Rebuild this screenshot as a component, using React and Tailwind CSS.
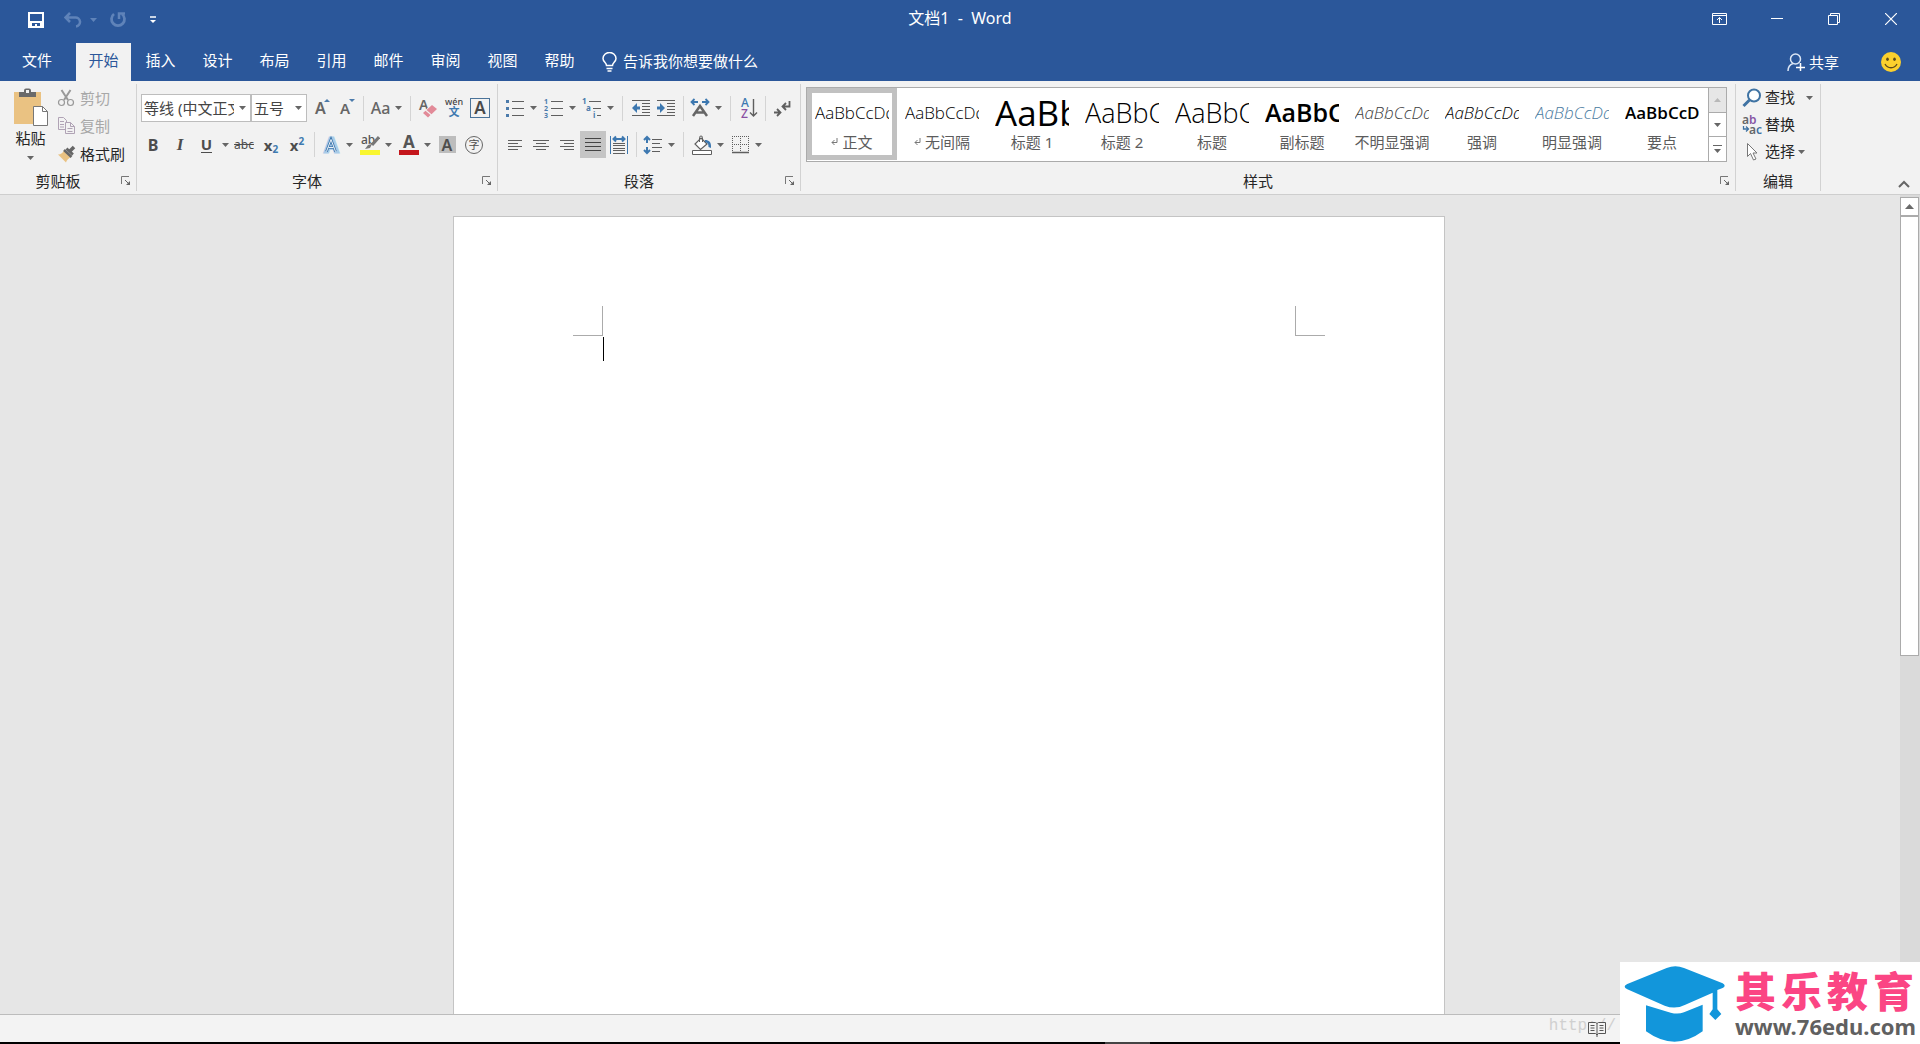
import React from "react";

function Arrow({ className = "text-[#666666]" }) {
  return (
    <svg className={`shrink-0 ${className}`} width="7" height="4" viewBox="0 0 7 4" aria-hidden="true">
      <path d="M0 0h7L3.5 4z" fill="currentColor" />
    </svg>
  );
}

function Icon({ w = 20, h = 20, children, className = "" }) {
  return (
    <svg
      className={`shrink-0 ${className}`}
      width={w}
      height={h}
      viewBox={`0 0 ${w} ${h}`}
      fill="none"
      stroke="#5f5f5f"
      strokeWidth="1"
      aria-hidden="true"
    >
      {children}
    </svg>
  );
}

function Tool({ label, w, menu, active, children }) {
  return (
    <button
      type="button"
      aria-label={label}
      className={`flex h-[27px] shrink-0 items-center justify-center gap-[5px] ${w} ${active ? "bg-[#c5c5c5]" : "hover:bg-[#dcdcdc]"}`}
    >
      {children}
      {menu && <Arrow />}
    </button>
  );
}

function Sep({ w }) {
  return (
    <span className={`flex shrink-0 justify-center ${w}`}>
      <span className="h-[25px] w-px bg-[#d4d4d4]" />
    </span>
  );
}

function Launcher({ label }) {
  return (
    <button type="button" aria-label={label} className="flex w-5 items-center justify-center">
      <Icon w={10} h={10}>
        <path d="M.5 8V.5H8" stroke="#777" />
        <path d="M4 4l4 4" stroke="#666" />
        <path d="M9 5v4H5z" fill="#666" stroke="none" />
      </Icon>
    </button>
  );
}

function Group({ title, w, launcher = true, children }) {
  return (
    <section aria-label={title} className={`flex flex-col border-r border-[#d2d2d2] ${w}`}>
      <div className="flex-1">{children}</div>
      <div className="flex h-5 items-center">
        <span className="flex-1 text-center leading-5">{title}</span>
        {launcher && <Launcher label={title + "设置"} />}
      </div>
    </section>
  );
}

function Combo({ label, value, w }) {
  return (
    <span className={`relative flex h-7 shrink-0 items-center border border-[#bdbdbd] bg-white ${w}`}>
      <select aria-label={label} className="h-full w-full appearance-none bg-transparent pr-4 pl-[2px] text-[#444444] outline-none">
        <option>{value}</option>
      </select>
      <span className="pointer-events-none absolute right-1">
        <Arrow />
      </span>
    </span>
  );
}

const tabs = ["开始", "插入", "设计", "布局", "引用", "邮件", "审阅", "视图", "帮助"];

const styles = [
  { name: "正文", mark: true, sample: "AaBbCcDd", cls: "text-[17px] font-light text-black", active: true },
  { name: "无间隔", mark: true, sample: "AaBbCcDd", cls: "text-[17px] font-light text-black" },
  { name: "标题 1", sample: "AaBb", cls: "text-[35px] font-medium text-black" },
  { name: "标题 2", sample: "AaBbC", cls: "text-[27px] font-light text-black" },
  { name: "标题", sample: "AaBbC", cls: "text-[27px] font-light text-black" },
  { name: "副标题", sample: "AaBbC", cls: "text-[25px] font-semibold text-black" },
  { name: "不明显强调", sample: "AaBbCcDd", cls: "text-[17px] font-light italic text-[#404040]" },
  { name: "强调", sample: "AaBbCcDd", cls: "text-[17px] font-light italic text-black" },
  { name: "明显强调", sample: "AaBbCcDd", cls: "text-[17px] font-light italic text-[#4a7ba0]" },
  { name: "要点", sample: "AaBbCcD", cls: "text-[17px] font-semibold text-black" },
];

function TitleBar() {
  return (
    <div className="grid h-[43px] grid-cols-3 items-start text-white">
      <div className="flex h-10 items-center">
        <button type="button" aria-label="保存" className="ml-7 flex">
          <Icon w={16} h={16}>
            <path d="M0 0h16v16H0zM2 2v7h12V2zM4 11v3h3v-2h2v2h3v-3z" fill="#fff" fillRule="evenodd" stroke="none" />
          </Icon>
        </button>
        <button type="button" aria-label="撤消" className="ml-5 flex items-center gap-2 text-[#6488bd]">
          <Icon w={18} h={16}>
            <path d="M6 1L1.500 5.500 6 10M2 5.500h9a4.500 4.500 0 0 1 1 9" stroke="#5f83b9" strokeWidth="2.500" />
          </Icon>
          <Arrow className="text-[#5f83b9]" />
        </button>
        <button type="button" aria-label="重复" className="ml-3 flex">
          <Icon w={18} h={16}>
            <path d="M5 2a6.500 6.500 0 1 0 8 0" stroke="#5f83b9" strokeWidth="2.800" />
            <path d="M10 7V1.500h6" stroke="#5f83b9" strokeWidth="2.500" />
          </Icon>
        </button>
        <button type="button" aria-label="自定义快速访问工具栏" className="ml-[23px] flex">
          <Icon w={6} h={8}>
            <path d="M0 1h6" stroke="#fff" strokeWidth="1.500" />
            <path d="M0 4h6L3 7z" fill="#fff" stroke="none" />
          </Icon>
        </button>
      </div>
      <h1 className="pt-[7px] text-center text-base leading-[22px] whitespace-pre">文档1  -  Word</h1>
      <div className="flex h-[38px] items-center justify-end pr-px">
        <button type="button" aria-label="功能区显示选项" className="flex w-[57px] justify-center">
          <Icon w={15} h={12}>
            <path d="M.5.5h14v11H.5zM.5 2.500h14M7.500 10V4.500M5 7l2.500-2.500L10 7" stroke="#fff" />
          </Icon>
        </button>
        <button type="button" aria-label="最小化" className="flex w-[57px] justify-center">
          <Icon w={12} h={12}>
            <path d="M0 5.500h12" stroke="#fff" />
          </Icon>
        </button>
        <button type="button" aria-label="向下还原" className="flex w-[57px] justify-center">
          <Icon w={12} h={12}>
            <path d="M.5 2.500h9v9h-9zM2.500 2.500v-2h9v9h-2" stroke="#fff" />
          </Icon>
        </button>
        <button type="button" aria-label="关闭" className="flex w-[57px] justify-center">
          <Icon w={12} h={12}>
            <path d="M0 0l12 12M12 0L0 12" stroke="#fff" strokeWidth="1.200" />
          </Icon>
        </button>
      </div>
    </div>
  );
}

function TabBar() {
  return (
    <nav className="flex h-[38px] text-white">
      <button type="button" className="w-[74px] pb-[3px]">文件</button>
      <div className="ml-[2px] flex gap-[2px]">
        {tabs.map((t, i) => (
          <button key={t} type="button" className={i === 0 ? "w-[55px] bg-[#f2f2f2] pb-[3px] text-[#2b579a]" : "w-[55px] pb-[3px]"}>
            {t}
          </button>
        ))}
      </div>
      <button type="button" className="ml-[15px] flex items-center gap-[6px]">
        <Icon w={15} h={20}>
          <path d="M4.500 13.500c0-3-3.500-3.500-3.500-7a6.500 6 0 0 1 13 0c0 3.500-3.500 4-3.500 7z" stroke="#fff" strokeWidth="1.500" />
          <path d="M4.500 16.500h6M5.500 19h4" stroke="#fff" strokeWidth="1.500" />
        </Icon>
        <span className="pb-px">告诉我你想要做什么</span>
      </button>
      <button type="button" className="ml-auto flex items-center gap-1">
        <Icon w={18} h={18}>
          <circle cx="8.500" cy="6" r="5" stroke="#dbe6f5" strokeWidth="1.500" />
          <path d="M1 18c0-4 2-6.500 5-7.500" stroke="#dbe6f5" strokeWidth="1.500" />
          <path d="M9 14.500h9M13.500 10v8" stroke="#fff" strokeWidth="1.500" />
        </Icon>
        共享
      </button>
      <button type="button" aria-label="反馈" className="mr-[19px] ml-[42px] flex items-center pb-px">
        <Icon>
          <circle cx="10" cy="10" r="10" fill="#fbd02d" stroke="none" />
          <ellipse cx="6.500" cy="7.200" rx="1.300" ry="1.800" fill="#5c4a1b" stroke="none" />
          <ellipse cx="13.500" cy="7.200" rx="1.300" ry="1.800" fill="#5c4a1b" stroke="none" />
          <path d="M4 12c2.500 5 9.500 5 12 0" stroke="#5c4a1b" strokeWidth="1.300" />
        </Icon>
      </button>
    </nav>
  );
}

function Clipboard() {
  return (
    <Group title="剪贴板" w="w-[137px]">
      <div className="flex">
        <button type="button" className="flex w-[56px] flex-col items-center pt-1 pl-[5px]">
          <Icon w={36} h={40}>
            <path d="M1 4h27v32H1z" fill="#eac282" stroke="none" />
            <path d="M6 9V4h5V2.500A2 2 0 0 1 13 .5h3a2 2 0 0 1 2 2V4h5v5z" fill="#6a6a6a" stroke="none" />
            <rect x="13" y="2" width="3" height="3" fill="#f2f2f2" stroke="none" />
            <path d="M20.500 18.500h9l5 5v14h-14z" fill="#fff" stroke="#777" />
            <path d="M29.500 18.500v5h5" stroke="#777" />
          </Icon>
          <span className="leading-5">粘贴</span>
          <span className="pt-2">
            <Arrow />
          </span>
        </button>
        <div className="flex flex-col">
          <button type="button" disabled className="flex h-7 items-center gap-1 text-[#a8a8a8]">
            <Icon>
              <path d="M5.500 2l6.500 10M14.500 2L8 12" stroke="#999" strokeWidth="2" />
              <circle cx="5.500" cy="14.500" r="3" stroke="#999" strokeWidth="1.200" />
              <circle cx="14.500" cy="14.500" r="3" stroke="#999" strokeWidth="1.200" />
            </Icon>
            剪切
          </button>
          <button type="button" disabled className="flex h-7 items-center gap-1 text-[#a8a8a8]">
            <Icon>
              <path d="M2.500 1.500h5l3 3v9h-8zM4 5.500h4M4 8.500h4M4 11h4" stroke="#b0a3b5" />
              <path d="M9.500 6.500h5l4 4v7h-9z" fill="#f2f2f2" stroke="#b0a3b5" />
              <path d="M14.500 6.500v4h4M11.500 12.500h5M11.500 15.500h5" stroke="#b0a3b5" />
            </Icon>
            复制
          </button>
          <button type="button" className="flex h-7 items-center gap-1">
            <Icon>
              <path d="M2 10.500c3 0 5-2 6-4l7 6.500c-2 1-4.500 3-5 5.500z" fill="#eac282" stroke="none" />
              <path d="M8 6l7.500 7M10.500 4.500l6.500 6" stroke="#666" strokeWidth="2.500" />
              <path d="M13.500 7.500L18 3" stroke="#666" strokeWidth="3.500" />
            </Icon>
            格式刷
          </button>
        </div>
      </div>
    </Group>
  );
}

function FontGroup() {
  return (
    <Group title="字体" w="w-[361px]">
      <div className="flex h-[38px] items-center pt-[10px] pl-1">
        <Combo label="字体" value="等线 (中文正文)" w="w-[110px]" />
        <Combo label="字号" value="五号" w="w-[56px]" />
        <span className="w-[3px]" />
        <Tool label="增大字号" w="w-[24px]">
          <Icon>
            <text x="3" y="16" fontSize="16" fontWeight="600" fill="#666" stroke="none">A</text>
            <path d="M12 4l3-3 3 3z" fill="#4b7bab" stroke="none" />
          </Icon>
        </Tool>
        <Tool label="减小字号" w="w-[26px]">
          <Icon>
            <text x="3" y="16" fontSize="15" fontWeight="600" fill="#666" stroke="none">A</text>
            <path d="M12 1h6l-3 3z" fill="#4b7bab" stroke="none" />
          </Icon>
        </Tool>
        <Sep w="w-[6px]" />
        <Tool label="更改大小写" w="w-[41px]" menu>
          <span className="text-base font-medium text-[#666666]">Aa</span>
        </Tool>
        <Sep w="w-[6px]" />
        <Tool label="清除所有格式" w="w-[30px]">
          <Icon>
            <text x="1" y="12" fontSize="14" fontWeight="600" fill="#666" stroke="none">A</text>
            <path d="M4 15l10-9 6 5-10 9z" fill="#f2f2f2" stroke="none" />
            <path d="M5 15l2.500-2.200 5 4.200-2.500 2.500zM8.500 12l5.500-5 5 4-5.500 5.200z" fill="#e28a98" stroke="none" />
          </Icon>
        </Tool>
        <Tool label="拼音指南" w="w-[22px]">
          <span className="flex flex-col items-center">
            <span className="text-[9px] leading-[8px] font-medium text-[#444444]">wén</span>
            <span className="text-[11px] leading-3 font-bold text-[#3f7ab0]">文</span>
          </span>
        </Tool>
        <Tool label="字符边框" w="w-[30px]">
          <span className="flex size-5 items-center justify-center border border-[#4a7399] text-[17px] font-semibold text-[#4a4a4a]">A</span>
        </Tool>
      </div>
      <div className="flex items-center pt-[9px] pl-1 text-[#4d4d4d]">
        <Tool label="加粗" w="w-[24px]">
          <span className="text-base font-bold">B</span>
        </Tool>
        <Tool label="倾斜" w="w-[30px]">
          <span className="font-['Liberation_Serif',serif] text-[17px] font-bold italic">I</span>
        </Tool>
        <Tool label="下划线" w="w-[35px]" menu>
          <span className="w-5 text-center">
            <span className="inline-block border-b border-[#4d4d4d] text-[15px] leading-4 font-bold">U</span>
          </span>
        </Tool>
        <Tool label="删除线" w="w-[28px]">
          <span className="text-xs line-through">abc</span>
        </Tool>
        <Tool label="下标" w="w-[26px]">
          <span className="flex items-end leading-5 font-bold">
            x<span className="text-[10px] leading-3 text-[#3f7ab0]">2</span>
          </span>
        </Tool>
        <Tool label="上标" w="w-[26px]">
          <span className="flex items-start leading-5 font-bold">
            x<span className="text-[10px] leading-3 text-[#3f7ab0]">2</span>
          </span>
        </Tool>
        <Sep w="w-[8px]" />
        <Tool label="文本效果" w="w-[38px]" menu>
          <Icon>
            <text x="4" y="17" fontSize="19" fontWeight="600" fill="#f8fcff" stroke="#a9cbe8" strokeWidth="3">A</text>
            <path d="M5.500 16.500L10 4.500l4.500 12M7.500 12.500h5" stroke="#3f78ad" strokeWidth="2.600" />
            <path d="M5.500 16.500L10 4.500l4.500 12M7.500 12.500h5" stroke="#fff" strokeWidth="0.900" />
          </Icon>
        </Tool>
        <Tool label="突出显示" w="w-[39px]" menu>
          <Icon>
            <text x="1" y="9" fontSize="12" fontWeight="500" fill="#555" stroke="none">ab</text>
            <path d="M19 2l-7 8" stroke="#777" strokeWidth="3" />
            <path d="M12 9l-2 4-5 1 3-4z" fill="#777" stroke="none" />
            <path d="M0 15h20v5H0z" fill="#f9f62f" stroke="none" />
          </Icon>
        </Tool>
        <Tool label="字体颜色" w="w-[40px]" menu>
          <Icon>
            <text x="4" y="13" fontSize="17" fontWeight="700" fill="#555" stroke="none">A</text>
            <path d="M0 15h20v5H0z" fill="#c4161c" stroke="none" />
          </Icon>
        </Tool>
        <Tool label="字符底纹" w="w-[24px]">
          <span className="flex size-[17px] items-center justify-center bg-[#bdbdbd] text-base font-semibold">A</span>
        </Tool>
        <Tool label="带圈字符" w="w-[30px]">
          <span className="flex size-[18px] items-center justify-center rounded-full border border-[#666666] text-[11px] leading-none">字</span>
        </Tool>
      </div>
    </Group>
  );
}

function ParagraphGroup() {
  return (
    <Group title="段落" w="w-[303px]">
      <div className="flex h-[38px] items-center pt-[10px] pl-1">
        <Tool label="项目符号" w="w-[38px]" menu>
          <Icon>
            <path d="M1 2h3v3H1zM1 9h3v3H1zM1 16h3v3H1z" fill="#4b7bab" stroke="none" />
            <path d="M7 3.500h12M7 10.500h12M7 17.500h12" />
          </Icon>
        </Tool>
        <Tool label="编号" w="w-[39px]" menu>
          <Icon>
            <g fontSize="7" fontWeight="700" fill="#4b7bab" stroke="none">
              <text x="0" y="6">1</text>
              <text x="0" y="13">2</text>
              <text x="0" y="20">3</text>
            </g>
            <path d="M7 3.500h12M7 10.500h12M7 17.500h12" />
          </Icon>
        </Tool>
        <Tool label="多级列表" w="w-[38px]" menu>
          <Icon>
            <g fontSize="8" fontWeight="700" fill="#4b7bab" stroke="none">
              <text x="0" y="6">1</text>
              <text x="4" y="13">a</text>
              <text x="11" y="20">i</text>
            </g>
            <path d="M7 3.500h12M11 10.500h8M15 17.500h4" />
          </Icon>
        </Tool>
        <Sep w="w-[11px]" />
        <Tool label="减少缩进量" w="w-[25px]">
          <Icon>
            <path d="M1 2.500h18M11 5.500h8M11 8.500h8M11 11.500h8M11 14.500h8M1 17.500h18" />
            <path d="M9 10H4" stroke="#3d78b0" strokeWidth="3" />
            <path d="M6 5v10L1 10z" fill="#3d78b0" stroke="none" />
          </Icon>
        </Tool>
        <Tool label="增加缩进量" w="w-[26px]">
          <Icon>
            <path d="M1 2.500h18M11 5.500h8M11 8.500h8M11 11.500h8M11 14.500h8M1 17.500h18" />
            <path d="M1 10h5" stroke="#3d78b0" strokeWidth="3" />
            <path d="M4 5v10l5-5z" fill="#3d78b0" stroke="none" />
          </Icon>
        </Tool>
        <Sep w="w-[8px]" />
        <Tool label="中文版式" w="w-[37px]" menu>
          <Icon>
            <path d="M3 18L10 8l7 10M6 14.500h8" stroke="#666" strokeWidth="2.500" />
            <path d="M2 4h6M12 4h6" stroke="#3d78b0" strokeWidth="1.800" />
            <path d="M4.500 1L1.500 4l3 3M15.500 1l3 3-3 3" stroke="#3d78b0" strokeWidth="1.800" />
          </Icon>
        </Tool>
        <Sep w="w-[12px]" />
        <Tool label="排序" w="w-[26px]">
          <Icon>
            <text x="2" y="9" fontSize="12" fontWeight="500" fill="#3d78b0" stroke="none">A</text>
            <text x="2" y="20" fontSize="12" fontWeight="500" fill="#8a4fa3" stroke="none">Z</text>
            <path d="M14.500 1v17M11 14.500l3.500 3.500 3.500-3.500" strokeWidth="1.400" />
          </Icon>
        </Tool>
        <Sep w="w-[6px]" />
        <Tool label="显示编辑标记" w="w-[28px]">
          <Icon>
            <path d="M17.500 3v5.500H11M14 5l-3.500 3.500L14 12" strokeWidth="1.800" />
            <path d="M2 14.500h6M5 11l3.500 3.500L5 18" strokeWidth="1.800" />
          </Icon>
        </Tool>
      </div>
      <div className="flex items-center pt-[9px] pl-1">
        <Tool label="左对齐" w="w-[25px]">
          <Icon>
            <path d="M3 5.500h14M3 8.500h10M3 11.500h14M3 14.500h10" />
          </Icon>
        </Tool>
        <Tool label="居中" w="w-[27px]">
          <Icon>
            <path d="M2 5.500h16M5 8.500h10M2 11.500h16M5 14.500h10" />
          </Icon>
        </Tool>
        <Tool label="右对齐" w="w-[26px]">
          <Icon>
            <path d="M3 5.500h14M7 8.500h10M3 11.500h14M7 14.500h10" />
          </Icon>
        </Tool>
        <Tool label="两端对齐" w="w-[26px]" active>
          <Icon>
            <path d="M2 3.500h16M2 7.500h16M2 11.500h16M2 15.500h16" stroke="#444" />
          </Icon>
        </Tool>
        <Tool label="分散对齐" w="w-[26px]">
          <Icon>
            <path d="M1.500 1v18M18.500 1v18" stroke="#3d78b0" />
            <path d="M4 8.500h12M4 10.500h12M4 13.500h12M4 15.500h12M4 18.500h12" />
            <path d="M5 4h10M7 1.500L4.500 4 7 6.500M13 1.500L15.500 4 13 6.500" stroke="#3d78b0" strokeWidth="2" />
          </Icon>
        </Tool>
        <Sep w="w-[8px]" />
        <Tool label="行和段落间距" w="w-[37px]" menu>
          <Icon>
            <path d="M9 4.500h10M9 8.500h8M9 12.500h10M9 16.500h8" />
            <path d="M4 2v6M4 12v6M1 5l3-3 3 3M1 15l3 3 3-3" stroke="#3d78b0" strokeWidth="2" />
          </Icon>
        </Tool>
        <Sep w="w-[12px]" />
        <Tool label="底纹" w="w-[38px]" menu>
          <Icon>
            <path d="M9 3l6 6-6.500 5.500L3 9z" fill="#fff" strokeWidth="1.200" />
            <path d="M7.500 7V2.500a1.500 1.500 0 0 1 3 0V7" />
            <path d="M13 5c4 0 6.500 2 6 8l-2.500-1c0-3-.5-4-3.500-5z" fill="#3d78b0" stroke="none" />
            <path d="M.5 15.500h19v4H.5z" fill="#fff" />
          </Icon>
        </Tool>
        <Tool label="边框" w="w-[37px]" menu>
          <Icon>
            <path d="M2 1.500h17M2.500 1v16M18.500 1v16M10.500 1v16M2 9.500h17" strokeDasharray="1 1" />
            <path d="M2 17.500h17" strokeWidth="1.500" />
          </Icon>
        </Tool>
      </div>
    </Group>
  );
}

function StylesGroup() {
  return (
    <Group title="样式" w="min-w-0 flex-1">
      <div className="mx-[5px] mt-[3px] mr-2 flex h-[75px] border border-[#ababab] bg-white">
        <div className="flex min-w-0 flex-1 overflow-hidden">
          {styles.map((s) => (
            <button
              key={s.name}
              type="button"
              className={`flex h-[72px] w-[90px] shrink-0 flex-col border-[5px] px-[3px] ${s.active ? "border-[#c1c1c1]" : "border-transparent"}`}
            >
              <span
                className={`flex h-[38px] w-full items-center overflow-hidden font-['Open_Sans','Noto_Sans',sans-serif] leading-none ${s.cls}`}
              >
                {s.sample}
              </span>
              <span className="flex w-full items-center justify-center gap-1 leading-[22px] whitespace-nowrap text-[#5c5c5c]">
                {s.mark && (
                  <Icon w={7} h={8}>
                    <path d="M6 0v4.500H1M3.500 2L1 4.500 3.500 7" stroke="#777" />
                  </Icon>
                )}
                {s.name}
              </span>
            </button>
          ))}
        </div>
        <div className="flex w-[18px] flex-col border-l border-[#ababab]">
          <button type="button" aria-label="上一行" className="flex flex-1 items-center justify-center bg-[#e6e6e6]">
            <Arrow className="rotate-180 text-[#b8b8b8]" />
          </button>
          <button type="button" aria-label="下一行" className="flex flex-1 items-center justify-center border-y border-[#ababab]">
            <Arrow />
          </button>
          <button type="button" aria-label="其他样式" className="flex flex-1 flex-col items-center justify-center gap-[3px]">
            <span className="h-px w-[9px] bg-[#666666]" />
            <Arrow />
          </button>
        </div>
      </div>
    </Group>
  );
}

function EditGroup() {
  return (
    <Group title="编辑" w="w-[85px]" launcher={false}>
      <div className="flex flex-col pl-[6px]">
        <button type="button" className="flex h-[27px] items-center gap-[3px]">
          <Icon>
            <circle cx="12" cy="7.500" r="6" fill="#fff" stroke="#3f73a3" strokeWidth="2" />
            <path d="M7.500 12L1.500 18" stroke="#3f73a3" strokeWidth="3" />
          </Icon>
          查找
          <span className="ml-2">
            <Arrow />
          </span>
        </button>
        <button type="button" className="flex h-[27px] items-center gap-[3px]">
          <Icon>
            <g fontSize="12" fontWeight="600" fill="#666" stroke="none">
              <text x="0" y="9">
                a<tspan fill="#8756a5">b</tspan>
              </text>
              <text x="7" y="19">
                a<tspan fill="#3f73a3">c</tspan>
              </text>
            </g>
            <path d="M1.500 11v3H6M4 11.500L6.500 14 4 16.500" stroke="#3f73a3" strokeWidth="1.300" />
          </Icon>
          替换
        </button>
        <button type="button" className="flex h-[27px] items-center gap-[3px]">
          <Icon>
            <path d="M5.500 1.500v13l3-3 3 6.500 2.500-1-3-6h4z" fill="#fff" stroke="#777" />
          </Icon>
          选择
          <Arrow />
        </button>
      </div>
    </Group>
  );
}

function Workspace() {
  return (
    <main className="flex min-h-0 flex-1 bg-[#e6e6e6]">
      <div className="flex min-w-0 flex-1 justify-center overflow-hidden pt-[21px]">
        <article className="h-[1403px] w-[992px] border border-[#c4c4c4] bg-white">
          <div className="flex justify-between px-[119px] pt-[89px]">
            <span className="size-[30px] border-r border-b border-[#ababab]" />
            <span className="size-[30px] border-b border-l border-[#ababab]" />
          </div>
          <div className="mx-[149px] pt-px">
            <span className="block h-[24px] w-px bg-black" />
          </div>
        </article>
      </div>
      <div className="flex w-[22px] flex-col bg-[#dadada] pr-px pl-[2px] shadow-[inset_2px_0_0_#e6e6e6]">
        <button type="button" aria-label="向上滚动" className="mt-[2px] flex h-[19px] items-center justify-center border border-[#ababab] bg-white">
          <svg width="9" height="5" viewBox="0 0 9 5" aria-hidden="true">
            <path d="M0 5h9L4.500 0z" fill="#6a6a6a" />
          </svg>
        </button>
        <span className="h-[440px] border border-[#ababab] bg-white" />
      </div>
    </main>
  );
}

function Brand() {
  return (
    <aside className="absolute right-0 bottom-0 flex h-[82px] w-[300px] items-start bg-white pl-1">
      <svg className="mt-1 shrink-0" width="102" height="76" viewBox="0 0 306 228" aria-hidden="true">
        <g fill="#1296db">
          <path d="M10 54L128 6q26-10 52 0l116 46q12 7 0 14l-16 6v58l12 14-18 18-18-18 10-14V80l-82 36q-30 16-62 3L10 70q-16-8 0-16z" />
          <path d="M66 118l74 22q22 6 40-1l56-23v80q-84 62-170 0z" />
        </g>
      </svg>
      <div className="flex min-w-0 flex-1 flex-col pt-[6px] pr-[6px] pl-[9px]">
        <strong className="flex justify-between text-[41px] leading-[46px] font-black text-[#fb4584]">
          {["其", "乐", "教", "育"].map((c) => (
            <span key={c}>{c}</span>
          ))}
        </strong>
        <a href="#home" className="text-[22px] leading-6 font-bold text-[#606060]">
          www.76edu.com
        </a>
      </div>
    </aside>
  );
}

export default function App() {
  return (
    <div className="relative flex h-screen flex-col overflow-hidden font-['Noto_Sans','Noto_Sans_CJK_SC',sans-serif] text-[15px] text-[#262626]">
      <header className="bg-[#2b579a]">
        <TitleBar />
        <TabBar />
      </header>
      <div className="flex h-[114px] border-b border-[#cecece] bg-[#f2f2f2] pt-[3px] pb-[3px]">
        <Clipboard />
        <FontGroup />
        <ParagraphGroup />
        <StylesGroup />
        <EditGroup />
        <div className="flex w-[99px] items-end justify-end pr-[10px] pb-[3px]">
          <button type="button" aria-label="折叠功能区">
            <Icon w={12} h={8}>
              <path d="M1 7l5-5 5 5" stroke="#666" strokeWidth="2" />
            </Icon>
          </button>
        </div>
      </div>
      <Workspace />
      <footer className="flex h-[28px] items-center justify-end border-t border-[#bcbcbc] bg-[#f3f3f3] pr-[300px]">
        <span className="pb-[6px] font-['Liberation_Mono',monospace] text-base text-[#d0d0d0]">http://</span>
        <button type="button" aria-label="阅读视图" className="-ml-7 flex w-8">
          <Icon w={18} h={16}>
            <path d="M.5 1.500h7l1.500 1 1.500-1h7v11h-7L9 14l-1.500-1.500h-7zM9 2.500V16" fill="#f3f3f3" stroke="#555" />
            <path d="M2.500 4.500h4M2.500 7h4M2.500 9.500h4M11.500 4.500h4M11.500 7h4M11.500 9.500h4" stroke="#555" />
          </Icon>
        </button>
      </footer>
      <div className="flex h-[2px] bg-black pl-[1105px]">
        <span className="w-[45px] bg-[#444444]" />
      </div>
      <Brand />
    </div>
  );
}
